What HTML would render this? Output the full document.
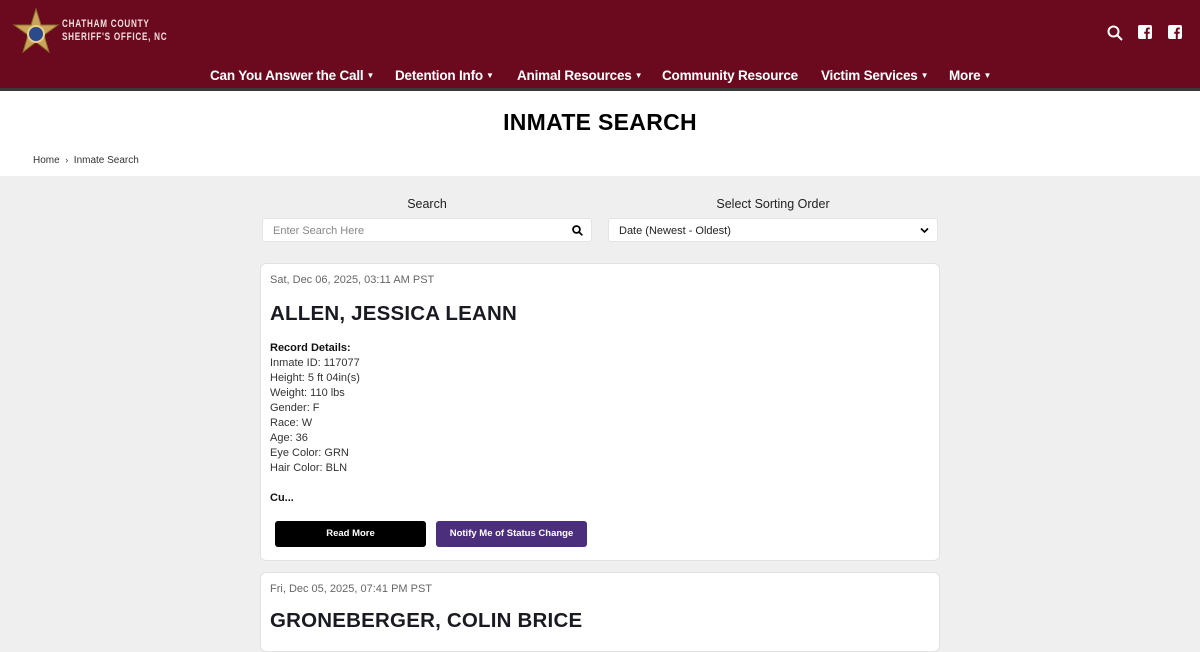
<!DOCTYPE html>
<html><head><meta charset="utf-8"><style>
*{box-sizing:border-box;margin:0;padding:0}
body{width:1200px;height:620px;overflow:hidden;background:#efefef;font-family:"Liberation Sans",sans-serif;color:#222}
.hdr{position:absolute;left:0;top:0;width:1200px;height:91px;background:#6b0a1e;border-bottom:3px solid #3a3a3a}
.logo{position:absolute;left:12px;top:8px}
.lt{position:absolute;left:62px;top:18px;color:#f3dede;font-weight:bold;font-size:11px;letter-spacing:1px;line-height:13px;transform:scaleX(0.74);transform-origin:0 0;white-space:nowrap}
.nav{position:absolute;top:68px;left:0;width:1200px;text-align:center;color:#fff;font-weight:bold;font-size:13.5px}
.nav span{position:absolute;top:0;white-space:nowrap;letter-spacing:-0.2px}
.nav small{font-size:8px;vertical-align:2px;margin-left:3px}
.icons{position:absolute;top:25px}
.white{position:absolute;top:91px;left:0;width:1200px;height:85px;background:#fff}
h1{position:absolute;top:109px;width:1200px;text-align:center;font-size:23px;font-weight:900;color:#000;letter-spacing:0.3px}
.bc{position:absolute;top:155px;left:33px;font-size:10px;color:#333}
.lbl{position:absolute;top:197px;font-size:12.5px;color:#222;text-align:center}
.inp{position:absolute;top:218px;height:24px;background:#fff;border-radius:3px;font-size:11px;padding:6px 10px;border:1px solid #e4e4e4}
.card{position:absolute;left:260px;width:680px;background:#fff;border-radius:6px;border:1px solid #e2e2e2}
.date{font-size:11px;color:#666;position:absolute;left:9px;top:10px}
.name{position:absolute;left:9px;font-size:20.5px;font-weight:900;color:#1a1a22;letter-spacing:0.2px}
.det{position:absolute;left:9px;top:77px;font-size:11px;line-height:15px;color:#333}
.btn{position:absolute;top:257px;height:26px;border-radius:3px;color:#fff;font-size:9.5px;font-weight:bold;text-align:center;line-height:26px}
</style></head><body>
<div class="hdr">
<svg class="logo" width="48" height="48" viewBox="0 0 48 48"><polygon points="24,1 29,17 46,17 32,27 37,44 24,34 11,44 16,27 2,17 19,17" fill="#c9a45a" stroke="#8a6a2a" stroke-width="1"/><circle cx="24" cy="26" r="8" fill="#2c4a8a" stroke="#e8d08a" stroke-width="2"/></svg>
<div class="lt">CHATHAM COUNTY<br>SHERIFF'S OFFICE, NC</div>
<svg class="icons" style="left:1107px" width="16" height="16" viewBox="0 0 16 16"><circle cx="6.5" cy="6.5" r="5" fill="none" stroke="#fff" stroke-width="2"/><line x1="10" y1="10" x2="15" y2="15" stroke="#fff" stroke-width="2"/></svg>
<svg class="icons" style="left:1138px" width="14" height="14" viewBox="0 0 14 14"><rect width="14" height="14" rx="2" fill="#fff"/><path d="M9.8 14V8.7h1.7l.3-2H9.8V5.4c0-.6.2-1 1-1h1V2.6c-.2 0-.8-.1-1.5-.1-1.5 0-2.5.9-2.5 2.6v1.6H6.2v2h1.6V14z" fill="#6b0a1e"/></svg>
<svg class="icons" style="left:1168px" width="14" height="14" viewBox="0 0 14 14"><rect width="14" height="14" rx="2" fill="#fff"/><path d="M9.8 14V8.7h1.7l.3-2H9.8V5.4c0-.6.2-1 1-1h1V2.6c-.2 0-.8-.1-1.5-.1-1.5 0-2.5.9-2.5 2.6v1.6H6.2v2h1.6V14z" fill="#6b0a1e"/></svg>
<div class="nav">
<span style="left:210px">Can You Answer the Call<small>▼</small></span>
<span style="left:395px">Detention Info<small>▼</small></span>
<span style="left:517px">Animal Resources<small>▼</small></span>
<span style="left:662px">Community Resource</span>
<span style="left:821px">Victim Services<small>▼</small></span>
<span style="left:949px">More<small>▼</small></span>
</div>
</div>
<div class="white"></div>
<h1>INMATE SEARCH</h1>
<div class="bc">Home &nbsp;<span style="font-size:9px">›</span>&nbsp; Inmate Search</div>
<div class="lbl" style="left:262px;width:330px">Search</div>
<div class="lbl" style="left:608px;width:330px">Select Sorting Order</div>
<div class="inp" style="left:262px;width:330px;color:#888">Enter Search Here<svg style="position:absolute;right:8px;top:6px" width="11" height="11" viewBox="0 0 16 16"><circle cx="6.5" cy="6.5" r="5" fill="none" stroke="#000" stroke-width="2.5"/><line x1="10" y1="10" x2="15" y2="15" stroke="#000" stroke-width="2.5"/></svg></div>
<div class="inp" style="left:608px;width:330px;color:#222">Date (Newest - Oldest)<svg style="position:absolute;right:8px;top:8px" width="9" height="7" viewBox="0 0 9 7"><path d="M1 1.5l3.5 3.5 3.5-3.5" fill="none" stroke="#000" stroke-width="1.6"/></svg></div>
<div class="card" style="top:263px;height:298px">
<div class="date">Sat, Dec 06, 2025, 03:11 AM PST</div>
<div class="name" style="top:38px">ALLEN, JESSICA LEANN</div>
<div class="det"><b style="color:#111">Record Details:</b><br>Inmate ID: 117077<br>Height: 5 ft 04in(s)<br>Weight: 110 lbs<br>Gender: F<br>Race: W<br>Age: 36<br>Eye Color: GRN<br>Hair Color: BLN<br><br><b style="color:#111">Cu...</b></div>
<div class="btn" style="left:14px;width:151px;background:#000">Read More</div>
<div class="btn" style="left:175px;width:151px;background:#4b2f7d">Notify Me of Status Change</div>
</div>
<div class="card" style="top:572px;height:80px">
<div class="date">Fri, Dec 05, 2025, 07:41 PM PST</div>
<div class="name" style="top:36px">GRONEBERGER, COLIN BRICE</div>
</div>
</body></html>
